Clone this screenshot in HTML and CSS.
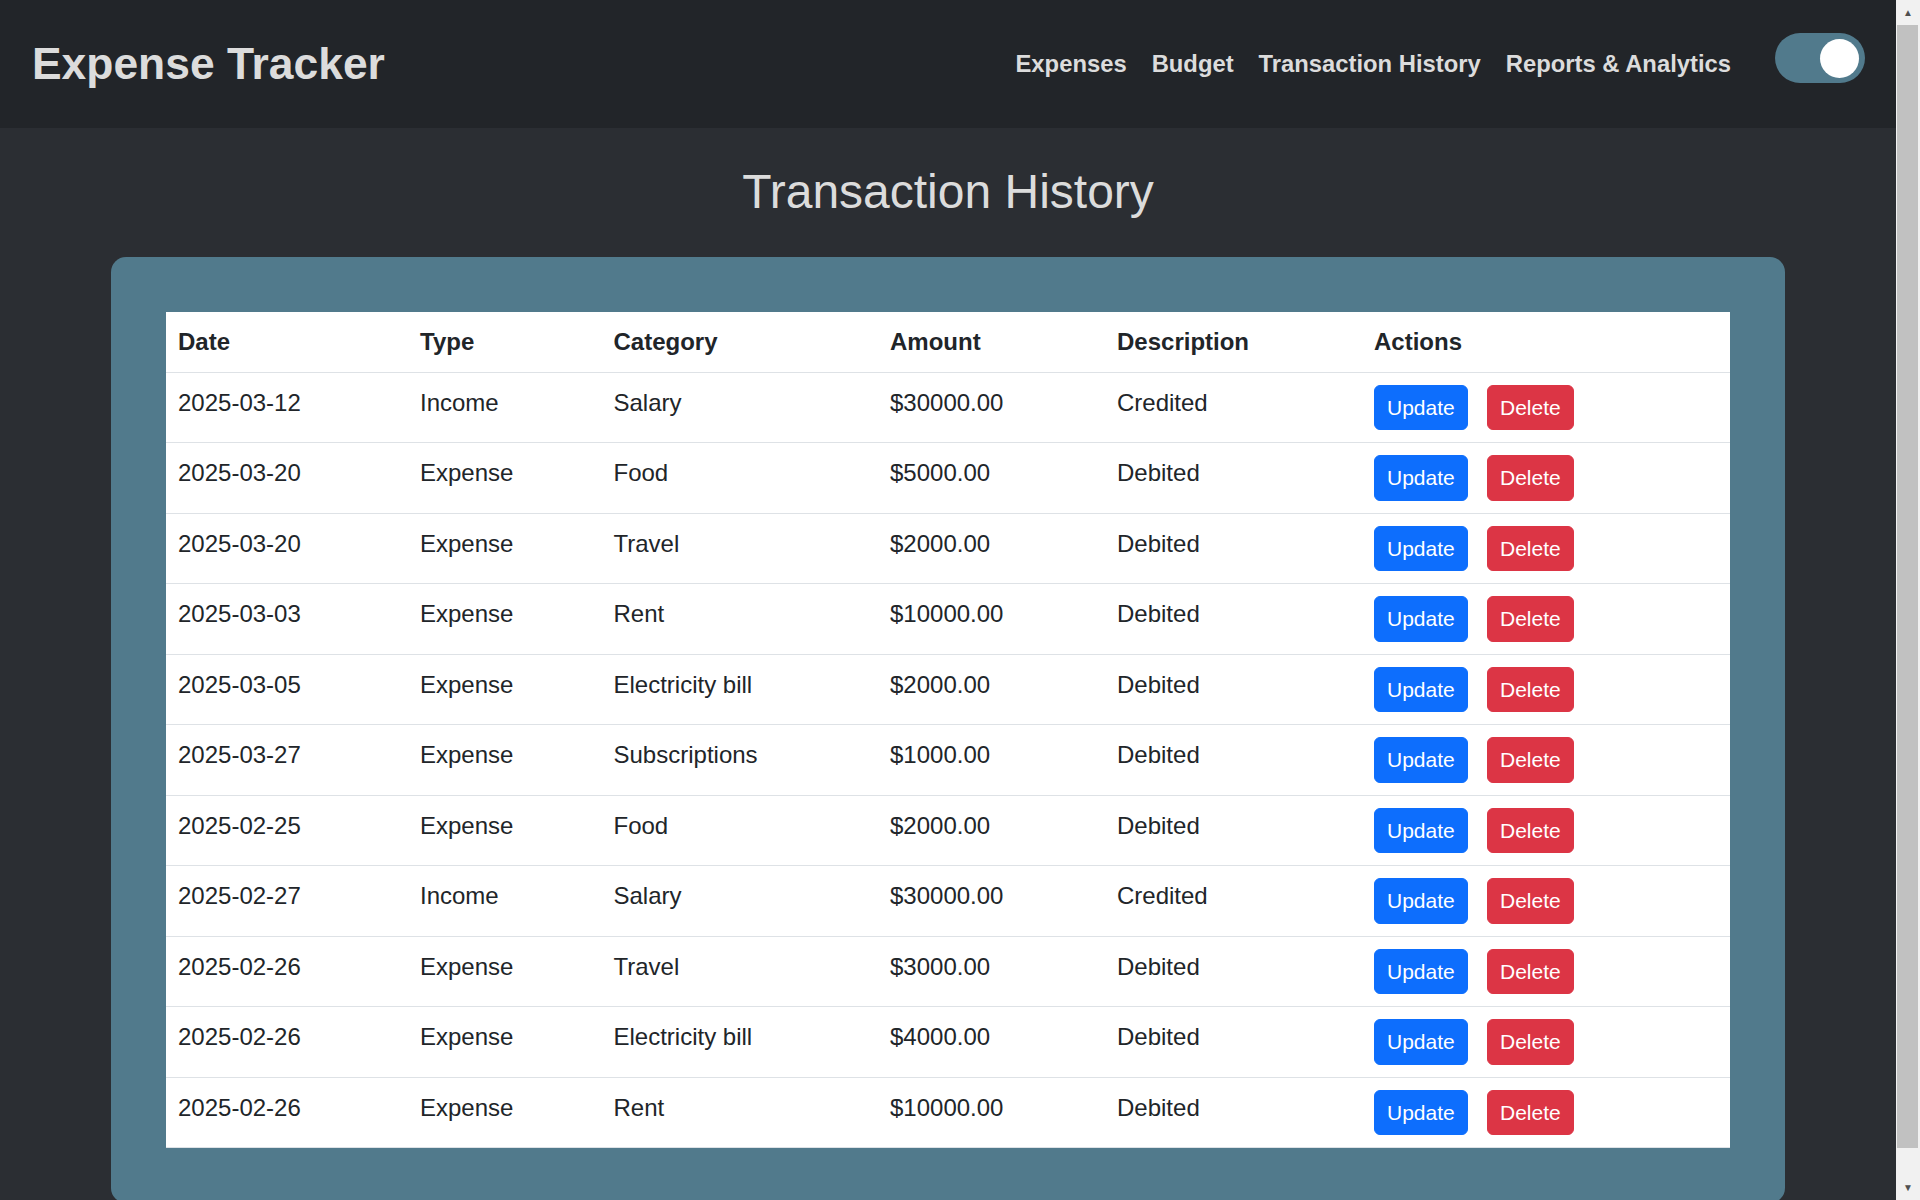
FILE: index.html
```html
<!DOCTYPE html>
<html lang="en">
<head>
<meta charset="utf-8">
<title>Expense Tracker - Transaction History</title>
<link rel="stylesheet" href="styles.css">
</head>
<body>
<div class="page">
<header class="navbar">
  <h1 class="brand">Expense Tracker</h1>
  <nav class="nav-links">
    <a href="#" class="nav-link">Expenses</a>
    <a href="#" class="nav-link">Budget</a>
    <a href="#" class="nav-link">Transaction History</a>
    <a href="#" class="nav-link">Reports &amp; Analytics</a>
  </nav>
  <div class="theme-toggle" role="switch" aria-checked="true"><span class="knob"></span></div>
</header>
<main class="main">
  <h2 class="page-title">Transaction History</h2>
  <section class="card">
    <table class="tx-table">
      <colgroup>
        <col class="c-date"><col class="c-type"><col class="c-cat"><col class="c-amt"><col class="c-desc"><col class="c-act">
      </colgroup>
      <thead>
        <tr><th>Date</th><th>Type</th><th>Category</th><th>Amount</th><th>Description</th><th>Actions</th></tr>
      </thead>
      <tbody>
        <tr><td>2025-03-12</td><td>Income</td><td>Salary</td><td>$30000.00</td><td>Credited</td><td><div class="actions"><button class="btn btn-update">Update</button><button class="btn btn-delete">Delete</button></div></td></tr>
        <tr><td>2025-03-20</td><td>Expense</td><td>Food</td><td>$5000.00</td><td>Debited</td><td><div class="actions"><button class="btn btn-update">Update</button><button class="btn btn-delete">Delete</button></div></td></tr>
        <tr><td>2025-03-20</td><td>Expense</td><td>Travel</td><td>$2000.00</td><td>Debited</td><td><div class="actions"><button class="btn btn-update">Update</button><button class="btn btn-delete">Delete</button></div></td></tr>
        <tr><td>2025-03-03</td><td>Expense</td><td>Rent</td><td>$10000.00</td><td>Debited</td><td><div class="actions"><button class="btn btn-update">Update</button><button class="btn btn-delete">Delete</button></div></td></tr>
        <tr><td>2025-03-05</td><td>Expense</td><td>Electricity bill</td><td>$2000.00</td><td>Debited</td><td><div class="actions"><button class="btn btn-update">Update</button><button class="btn btn-delete">Delete</button></div></td></tr>
        <tr><td>2025-03-27</td><td>Expense</td><td>Subscriptions</td><td>$1000.00</td><td>Debited</td><td><div class="actions"><button class="btn btn-update">Update</button><button class="btn btn-delete">Delete</button></div></td></tr>
        <tr><td>2025-02-25</td><td>Expense</td><td>Food</td><td>$2000.00</td><td>Debited</td><td><div class="actions"><button class="btn btn-update">Update</button><button class="btn btn-delete">Delete</button></div></td></tr>
        <tr><td>2025-02-27</td><td>Income</td><td>Salary</td><td>$30000.00</td><td>Credited</td><td><div class="actions"><button class="btn btn-update">Update</button><button class="btn btn-delete">Delete</button></div></td></tr>
        <tr><td>2025-02-26</td><td>Expense</td><td>Travel</td><td>$3000.00</td><td>Debited</td><td><div class="actions"><button class="btn btn-update">Update</button><button class="btn btn-delete">Delete</button></div></td></tr>
        <tr><td>2025-02-26</td><td>Expense</td><td>Electricity bill</td><td>$4000.00</td><td>Debited</td><td><div class="actions"><button class="btn btn-update">Update</button><button class="btn btn-delete">Delete</button></div></td></tr>
        <tr><td>2025-02-26</td><td>Expense</td><td>Rent</td><td>$10000.00</td><td>Debited</td><td><div class="actions"><button class="btn btn-update">Update</button><button class="btn btn-delete">Delete</button></div></td></tr>
      </tbody>
    </table>
  </section>
</main>
</div>
<div class="scrollbar" aria-hidden="true">
  <div class="sb-arrow">&#9650;</div>
  <div class="sb-track"><div class="sb-thumb"></div></div>
  <div class="sb-arrow">&#9660;</div>
</div>
</body>
</html>
```
FILE: styles.css
```css
* { box-sizing: border-box; }

html, body {
  margin: 0;
  padding: 0;
}

body {
  display: flex;
  align-items: flex-start;
  background: #2b2e33;
  font-family: "Liberation Sans", Arial, sans-serif;
  color: #dcdcdc;
}

.page {
  flex: 1 1 auto;
  min-width: 0;
}

/* classic window scrollbar */
.scrollbar {
  flex: 0 0 24px;
  height: 100vh;
  display: flex;
  flex-direction: column;
  background: #f1f1f1;
}

.sb-arrow {
  height: 25px;
  flex: 0 0 25px;
  display: flex;
  align-items: center;
  justify-content: center;
  font-size: 10px;
  color: #505050;
  line-height: 1;
}

.sb-track {
  flex: 1 1 auto;
  display: flex;
  flex-direction: column;
  padding: 0 2px 27px 1px;
}

.sb-thumb {
  flex: 1 1 auto;
  background: #c1c1c1;
}

/* Navbar */
.navbar {
  display: flex;
  align-items: center;
  height: 128px;
  padding: 0 31px 0 32px;
  background: #222529;
}

.brand {
  margin: 0;
  font-size: 44.4px;
  font-weight: 700;
  line-height: 1.2;
  color: #dcdcdc;
}

.nav-links {
  display: flex;
  align-items: center;
  gap: 25px;
  margin-left: auto;
}

.nav-link {
  font-size: 23.8px;
  font-weight: 700;
  line-height: 1.5;
  color: #dcdcdc;
  text-decoration: none;
}

.theme-toggle {
  position: relative;
  width: 90px;
  height: 50px;
  margin-left: 44px;
  margin-bottom: 12px;
  border-radius: 25px;
  background: #517a8c;
}

.theme-toggle .knob {
  position: absolute;
  top: 6px;
  right: 6px;
  width: 39px;
  height: 39px;
  border-radius: 50%;
  background: #ffffff;
}

/* Main */
.main {
  padding-top: 35px;
  padding-bottom: 25px;
}

.page-title {
  margin: 0 0 36px;
  text-align: center;
  font-size: 48px;
  font-weight: 400;
  line-height: 57.6px;
  color: #dcdcdc;
}

.card {
  margin: 0 111px;
  padding: 55px;
  background: #517a8c;
  border-radius: 15px;
}

.tx-table {
  width: 100%;
  border-collapse: collapse;
  table-layout: fixed;
  background: #ffffff;
  color: #212529;
  font-size: 24px;
  line-height: 36px;
}

.c-date { width: 242px; }
.c-type { width: 193.5px; }
.c-cat { width: 276.5px; }
.c-amt { width: 227px; }
.c-desc { width: 257px; }
.c-act { width: auto; }

.tx-table th,
.tx-table td {
  padding: 12px;
  text-align: left;
  vertical-align: top;
  border-bottom: 1px solid #dee2e6;
}

.tx-table th {
  font-weight: 700;
}

.actions {
  display: flex;
  gap: 19.3px;
}

.btn {
  font-family: "Liberation Sans", Arial, sans-serif;
  font-size: 21px;
  line-height: 31.5px;
  padding: 6px 12px;
  border: 1px solid transparent;
  border-radius: 6px;
  color: #ffffff;
  cursor: pointer;
}

.btn-update {
  background: #0d6efd;
  border-color: #0d6efd;
}

.btn-delete {
  background: #dc3545;
  border-color: #dc3545;
}
```
